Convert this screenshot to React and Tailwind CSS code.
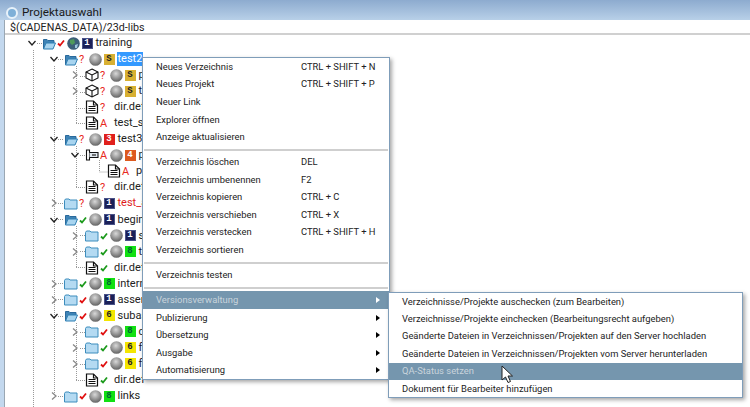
import React from "react";

const FONT = "font-['Roboto','Noto_Sans',sans-serif]";

const indents = {
  0: "pl-[27px]",
  1: "pl-[49px]",
  2: "pl-[70px]",
  3: "pl-[92px]",
};

const badgeStyles = {
  navy: "bg-[#1b2058] text-white border border-[#4a5288]",
  gold: "bg-[#d8b032] text-[#222]",
  red: "bg-[#e0201c] text-white",
  orange: "bg-[#dd5a1e] text-white",
  green: "bg-[#12e012] text-[#063]",
  yellow: "bg-[#f4e600] text-[#222]",
};

const rows = [
  { level: 0, exp: "open", icon: "open", status: "red", globe: "blue", badge: ["navy", "1"], label: "training" },
  { level: 1, exp: "open", icon: "open", status: "?", globe: "grey", badge: ["gold", "S"], label: "test2", selected: true },
  { level: 2, exp: "closed", icon: "cube", status: "?", globe: "grey", badge: ["gold", "S"], label: "p" },
  { level: 2, exp: "closed", icon: "cube", status: "?", globe: "grey", badge: ["gold", "S"], label: "t" },
  { level: 2, icon: "doc", status: "?", label: "dir.def" },
  { level: 2, icon: "doc", status: "A", label: "test_sp" },
  { level: 1, exp: "open", icon: "open", status: "?", globe: "grey", badge: ["red", "3"], label: "test3" },
  { level: 2, exp: "open", icon: "link", status: "A", globe: "grey", badge: ["orange", "4"], label: "p" },
  { level: 3, icon: "doc", status: "A", label: "p" },
  { level: 2, icon: "doc", status: "?", label: "dir.def" },
  { level: 1, exp: "closed", icon: "folder", status: "?", globe: "grey", badge: ["navy", "1"], label: "test_a", red: true },
  { level: 1, exp: "open", icon: "open", status: "green", globe: "grey", badge: ["navy", "1"], label: "begin" },
  { level: 2, exp: "closed", icon: "folder", status: "green", globe: "grey", badge: ["navy", "1"], label: "s" },
  { level: 2, exp: "closed", icon: "folder", status: "green", globe: "grey", badge: ["green", "8"], label: "t" },
  { level: 2, icon: "doc", status: "green", label: "dir.def" },
  { level: 1, exp: "closed", icon: "folder", status: "green", globe: "grey", badge: ["green", "8"], label: "intern" },
  { level: 1, exp: "closed", icon: "folder", status: "red", globe: "grey", badge: ["navy", "1"], label: "assem" },
  { level: 1, exp: "open", icon: "open", status: "red", globe: "grey", badge: ["yellow", "6"], label: "subas" },
  { level: 2, exp: "closed", icon: "folder", status: "red", globe: "grey", badge: ["green", "8"], label: "c" },
  { level: 2, exp: "closed", icon: "folder", status: "green", globe: "grey", badge: ["yellow", "6"], label: "f" },
  { level: 2, exp: "closed", icon: "folder", status: "red", globe: "grey", badge: ["yellow", "6"], label: "f" },
  { level: 2, icon: "doc", status: "green", label: "dir.def" },
  { level: 1, exp: "closed", icon: "folder", status: "red", globe: "grey", badge: ["green", "8"], label: "links" },
];

const mainMenu = [
  [
    ["Neues Verzeichnis", "CTRL + SHIFT + N"],
    ["Neues Projekt", "CTRL + SHIFT + P"],
    ["Neuer Link"],
    ["Explorer öffnen"],
    ["Anzeige aktualisieren"],
  ],
  [
    ["Verzeichnis löschen", "DEL"],
    ["Verzeichnis umbenennen", "F2"],
    ["Verzeichnis kopieren", "CTRL + C"],
    ["Verzeichnis verschieben", "CTRL + X"],
    ["Verzeichnis verstecken", "CTRL + SHIFT + H"],
    ["Verzeichnis sortieren"],
  ],
  [["Verzeichnis testen"]],
];

const subItems = ["Publizierung", "Übersetzung", "Ausgabe", "Automatisierung"];

const versionItems = [
  "Verzeichnisse/Projekte auschecken (zum Bearbeiten)",
  "Verzeichnisse/Projekte einchecken (Bearbeitungsrecht aufgeben)",
  "Geänderte Dateien in Verzeichnissen/Projekten auf den Server hochladen",
  "Geänderte Dateien in Verzeichnissen/Projekten vom Server herunterladen",
  "QA-Status setzen",
  "Dokument für Bearbeiter hinzufügen",
];

const Chevron = ({ exp }) => (
  <svg width="10" height="10" viewBox="0 0 10 10" fill="none" className="shrink-0">
    {exp === "open" && <path d="M1.5 3 L5 7 L8.5 3" stroke="#222" strokeWidth="1.3" />}
    {exp === "closed" && <path d="M3 1.5 L7 5 L3 8.5" stroke="#888" strokeWidth="1.3" />}
  </svg>
);

const RowIcon = ({ type }) => {
  if (type === "folder") {
    return (
      <svg width="14" height="13" viewBox="0 0 14 13" className="shrink-0">
        <path d="M0.5 3.5 L1.5 2 H5 L6 3 H13 V12 H0.5 Z" fill="#b4daf2" stroke="#3d8dbd" />
      </svg>
    );
  }
  if (type === "open") {
    return (
      <svg width="14" height="13" viewBox="0 0 14 13" className="shrink-0">
        <path d="M1.5 12 V2.5 H5 L6 3.5 H12 V6" fill="#3f83b5" stroke="#2a6a9c" />
        <path d="M1.5 12 L4 6 H13.5 L11 12 Z" fill="#a8d4ef" stroke="#2f7fb3" />
      </svg>
    );
  }
  if (type === "cube") {
    return (
      <svg width="14" height="14" viewBox="0 0 14 14" fill="none" stroke="#111" strokeWidth="1.1" className="shrink-0">
        <path d="M7 1 L13 4 V10 L7 13 L1 10 V4 Z" fill="#fff" />
        <path d="M1 4 L7 7 L13 4 M7 7 V13" />
      </svg>
    );
  }
  if (type === "link") {
    return (
      <svg width="14" height="14" viewBox="0 0 14 14" fill="none" stroke="#111" strokeWidth="1.1" className="shrink-0">
        <path d="M1.5 2 H4.5 V12 H1.5 Z" fill="#fff" />
        <path d="M4.5 4.5 H13 V9.5 H4.5" fill="#dfe7ee" />
        <path d="M7 7 H11" />
      </svg>
    );
  }
  return (
    <svg width="14" height="14" viewBox="0 0 14 14" fill="none" stroke="#111" strokeWidth="1.2" className="shrink-0">
      <path d="M1.5 1 H8.5 L12.5 5 V13 H1.5 Z" fill="#fff" />
      <path d="M8.5 1 V5 H12.5" />
      <path d="M3.5 6.5 H10.5 M3.5 8.5 H10.5 M3.5 10.5 H10.5" />
    </svg>
  );
};

const Status = ({ status }) => {
  if (status === "red" || status === "green") {
    return (
      <svg width="8" height="8" viewBox="0 0 8 8" fill="none" className="ml-[1px]">
        <path
          d="M1 4.5 L3 6.5 L7 1.5"
          stroke={status === "red" ? "#e01010" : "#1c9a1c"}
          strokeWidth="1.8"
        />
      </svg>
    );
  }
  return <span className="ml-[1px] text-[11px] leading-none text-[#e8281c]">{status}</span>;
};

const Globe = ({ kind, id }) => (
  <svg width="13" height="13" viewBox="0 0 13 13" className="shrink-0">
    <defs>
      <radialGradient id={id} cx="0.45" cy="0.35" r="0.7">
        <stop offset="0" stopColor="#d8d8d8" />
        <stop offset="1" stopColor="#5a5a5a" />
      </radialGradient>
    </defs>
    <circle cx="6.5" cy="6.5" r="6.3" fill={kind === "blue" ? "#3c5f78" : `url(#${id})`} />
    {kind === "blue" && (
      <>
        <path d="M3 3 L7 2 L8 6 L5 8 L3 6 Z" fill="#4f9a5a" />
        <path d="M8 8 L11 7 L10 11 L8 11 Z" fill="#9fc7de" />
      </>
    )}
  </svg>
);

const TreeRow = ({ row, index }) => (
  <div className={`flex h-[16.05px] items-center ${indents[row.level]}`}>
    <Chevron exp={row.exp} />
    <span className="w-[5px] shrink-0" />
    <RowIcon type={row.icon} />
    <span className="flex w-[10px] shrink-0 items-center">
      <Status status={row.status} />
    </span>
    {row.globe ? (
      <>
        <span className="ml-[0.5px] flex">
          <Globe kind={row.globe} id={`globe-${index}`} />
        </span>
        <span
          className={`ml-[2px] flex h-[11px] w-[11px] shrink-0 items-center justify-center font-['Liberation_Mono',monospace] text-[9px] leading-none font-bold ${badgeStyles[row.badge[0]]}`}
        >
          {row.badge[1]}
        </span>
        <span className="w-[2px] shrink-0" />
      </>
    ) : (
      <span className="w-[4px] shrink-0" />
    )}
    <span
      className={`px-[1px] text-[11px] leading-[14px] ${
        row.selected ? "bg-[#3399ff] text-white" : row.red ? "text-[#e01c1c]" : "text-[#222]"
      }`}
    >
      {row.label}
    </span>
  </div>
);

// the dotted tree lines
const TreeLines = () => (
  <svg width="750" height="407" className="absolute top-0 left-0" fill="none" stroke="#999" strokeDasharray="1 1">
    <path d="M33.5 50 V407" />
    <path d="M54.5 66 V396" />
    <path d="M76.5 66 V124 M76.5 146 V187 M76.5 226 V268 M76.5 323 V381" />
    <path d="M99.5 160 V172 H108" />
    <path d="M37 43.5 H42 M58 59.5 H63 M58 139.5 H63 M58 203.5 H63 M58 219.5 H63 M58 283.5 H63 M58 299.5 H63 M58 316.5 H63 M58 396.5 H63" />
    <path d="M80 76.5 H85 M80 92.5 H85 M76 108.5 H85 M76 123.5 H85 M80 155.5 H85 M76 187.5 H85 M80 235.5 H85 M80 251.5 H85 M76 267.5 H85 M80 332.5 H85 M80 348.5 H85 M80 364.5 H85 M76 380.5 H85" />
  </svg>
);

const Arrow = ({ white }) => (
  <span
    className={`h-0 w-0 border-y-[3.5px] border-l-[4px] border-y-transparent ${
      white ? "border-l-white" : "border-l-black"
    }`}
  />
);

const MenuItem = ({ label, shortcut, arrow }) => (
  <div className="flex h-[17.6px] items-center pl-[13px] pr-[9px] text-[#222]">
    <span className="w-[145px] shrink-0 whitespace-nowrap">{label}</span>
    {shortcut && <span className="whitespace-nowrap">{shortcut}</span>}
    {arrow && <span className="ml-auto flex"><Arrow /></span>}
  </div>
);

const Separator = () => (
  <div className="flex h-[7.4px] items-center px-[1px]">
    <div className="h-[2px] w-full bg-[#cfcfcf]" />
  </div>
);

const App = () => {
  return (
    <div className={`relative h-[407px] w-[750px] overflow-hidden bg-white text-[9.4px] ${FONT}`}>
      <div className="flex h-[20px] items-center gap-[4px] bg-gradient-to-b from-[#8dabcf] to-[#b8d0e8] pt-[5px] pl-[6px]">
        <span className="h-[12px] w-[12px] rounded-full border-[2px] border-[#e8f2fa] bg-[#7fb0d8]" />
        <span className="text-[11.7px] text-[#1a1a1a]">Projektauswahl</span>
      </div>
      <div className="flex h-[387px]">
        <div className="w-[5px] shrink-0 border-r border-[#9aa7b3] bg-[#c3d8ee]" />
        <div className="relative min-w-0 flex-1">
          <div className="flex h-[15px] items-center border-b-2 border-[#d0d0d0] pt-[3px] pl-[5px] text-[10.7px] text-[#222]">
            $(CADENAS_DATA)/23d-libs
          </div>
        </div>
      </div>

      <TreeLines />

      <div className="absolute top-[35px] left-0 w-[380px]">
        {rows.map((row, i) => (
          <TreeRow key={i} row={row} index={i} />
        ))}
      </div>

      {/* context menu */}
      <div className="absolute top-[57px] left-[142px] w-[248px] border border-[#7f9db9] bg-white shadow-[2px_2px_4px_rgba(0,0,0,0.35)]">
        {mainMenu.map((group, g) => (
          <div key={g}>
            {group.map(([label, shortcut]) => (
              <MenuItem key={label} label={label} shortcut={shortcut} />
            ))}
            <Separator />
          </div>
        ))}
        <div className="flex h-[17.6px] items-center justify-between bg-[#7596ae] pl-[13px] pr-[9px] text-[#c9d4dc]">
          <span>Versionsverwaltung</span>
          <Arrow white />
        </div>
        {subItems.map((label) => (
          <MenuItem key={label} label={label} arrow />
        ))}
      </div>

      {/* version submenu */}
      <div className="absolute top-[292px] left-[388px] w-[355px] border border-[#7f9db9] bg-white shadow-[2px_2px_4px_rgba(0,0,0,0.35)]">
        {versionItems.map((label, i) => (
          <div
            key={label}
            className={`flex h-[17.4px] items-center pl-[13px] whitespace-nowrap ${
              i === 4 ? "bg-[#7596ae] text-[#c9d4dc]" : "text-[#222]"
            }`}
          >
            {label}
          </div>
        ))}
      </div>

      {/* mouse pointer */}
      <svg width="13" height="19" viewBox="0 0 13 19" className="absolute top-[365px] left-[501px]">
        <path d="M1 1 V15 L4.5 12 L7 17.5 L9.5 16.5 L7 11 H11.5 Z" fill="#fff" stroke="#222" strokeWidth="1" />
      </svg>
    </div>
  );
};

export default App;
